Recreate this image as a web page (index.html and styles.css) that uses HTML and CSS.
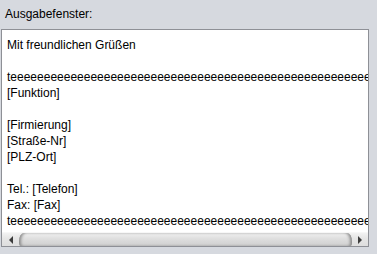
FILE: index.html
```html
<!DOCTYPE html>
<html lang="de">
<head>
<meta charset="utf-8">
<link rel="stylesheet" href="styles.css">
</head>
<body>
<div class="panel">
  <div class="label">Ausgabefenster:</div>
  <div class="box">
    <div class="text">Mit freundlichen Grüßen

teeeeeeeeeeeeeeeeeeeeeeeeeeeeeeeeeeeeeeeeeeeeeeeeeeeeeeeeeeeeeeeeeeeeeeeeeeeeeeeeeeeeeeeeeee
[Funktion]

[Firmierung]
[Straße-Nr]
[PLZ-Ort]

Tel.: [Telefon]
Fax: [Fax]
teeeeeeeeeeeeeeeeeeeeeeeeeeeeeeeeeeeeeeeeeeeeeeeeeeeeeeeeeeeeeeeeeeeeeeeeeeeeeeeeeeeeeeeeeee</div>
    <div class="hscroll">
      <div class="btn btn-left">
        <svg width="6" height="8" viewBox="0 0 6 8"><polygon points="5,0 5,8 1,4" fill="#3c3c3c"/></svg>
      </div>
      <div class="track"><div class="thumb"></div></div>
      <div class="btn btn-right">
        <svg width="6" height="8" viewBox="0 0 6 8"><polygon points="1,0 1,8 5,4" fill="#3c3c3c"/></svg>
      </div>
    </div>
  </div>
</div>
</body>
</html>
```

FILE: styles.css
```css
html, body {
  margin: 0;
  padding: 0;
  background: #d6d9df;
}
body {
  font-family: "Liberation Sans", Arial, sans-serif;
  font-size: 12px;
  color: #000;
  width: 377px;
  height: 254px;
  overflow: hidden;
}
.panel {
  display: flex;
  flex-direction: column;
}
.label {
  padding: 6px 0 0 5px;
  line-height: 16px;
  height: 16px;
  margin-bottom: 7px;
}
.box {
  margin-left: 1px;
  width: 368px;
  height: 218px;
  box-sizing: border-box;
  border: 1px solid #8e9096;
  background: #fff;
  display: flex;
  flex-direction: column;
}
.text {
  flex: 1;
  overflow: hidden;
  white-space: pre;
  line-height: 16px;
  padding: 7px 0 0 5px;
}
.hscroll {
  height: 14px;
  display: flex;
  background: linear-gradient(to bottom, #f2f2f2 0%, #e6e6e6 40%, #dedede 100%);
  border-top: 1px solid #f7f7f7;
  box-sizing: border-box;
}
.btn {
  width: 17px;
  display: flex;
  align-items: center;
  justify-content: center;
}
.btn-right {
  width: 16px;
}
.track {
  flex: 1;
  display: flex;
}
.thumb {
  flex: 1;
  border-radius: 5px 5px 2px 2px / 8px 8px 3px 3px;
  background: linear-gradient(to bottom, #f0f0f0 0%, #dedede 45%, #cfcfcf 100%);
  box-shadow: inset 3px 0 3px -1px #8c8c8c, inset -3px 0 3px -1px #8c8c8c;
}
```
